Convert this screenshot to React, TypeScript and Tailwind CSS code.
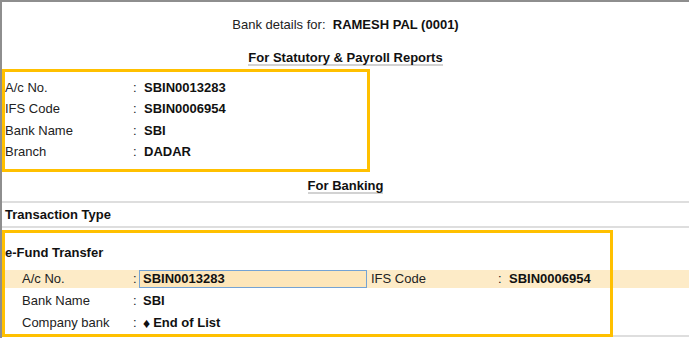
import * as React from 'react'

type Row = { label: string; value: React.ReactNode }

const statutory: Row[] = [
  { label: 'A/c No.', value: 'SBIN0013283' },
  { label: 'IFS Code', value: 'SBIN0006954' },
  { label: 'Bank Name', value: 'SBI' },
  { label: 'Branch', value: 'DADAR' },
]

function Field({ label, value }: Row) {
  return (
    <div className="flex h-[21.5px] items-center">
      <span className="w-[128px]">{label}</span>
      <span className="w-[11px]">:</span>
      <span className="font-bold text-[#111]">{value}</span>
    </div>
  )
}

function SectionTitle({ children }: { children: React.ReactNode }) {
  return (
    <div className="flex h-4 justify-center">
      <span className="border-b-2 border-[#d2d2d2] font-bold text-[#111]">{children}</span>
    </div>
  )
}

export default function App() {
  return (
    <div className="h-[338px] w-[689px] overflow-hidden border-t-2 border-l-2 border-[#8e8e8e] bg-white font-['Liberation_Sans',Arial,sans-serif] text-[13px] leading-4 text-[#222]">
      <div className="pt-[15px] text-center">
        Bank details for:&nbsp; <span className="font-bold text-[#111]">RAMESH PAL (0001)</span>
      </div>

      <div className="mt-[17px]">
        <SectionTitle>For Statutory &amp; Payroll Reports</SectionTitle>
      </div>

      {/* statutory block */}
      <div className="mt-[3px] w-[368px] border-[3px] border-[#FFC000] pt-[5px] pb-[6px]">
        {statutory.map((r) => (
          <Field key={r.label} {...r} />
        ))}
      </div>

      <div className="mt-[6px]">
        <SectionTitle>For Banking</SectionTitle>
      </div>

      <div className="mt-[7px] h-[2px] bg-[#dedede]" />
      <div className="flex h-[23px] items-center pl-[3px] font-bold text-[#111]">Transaction Type</div>
      <div className="h-[2px] bg-[#dedede]" />

      {/* e-fund block */}
      <div className="relative mt-[2px] border-b-2 border-[#dedede] pt-3 pb-[1px]">
        <div className="flex h-[22px] items-center pl-[3px] font-bold text-[#111]">e-Fund Transfer</div>

        <div className="mt-[6px] flex h-[18px] items-center bg-[#fdebc7] pl-5">
          <span className="w-[111px]">A/c No.</span>
          <span className="w-[6px]">:</span>
          <span className="flex h-[18px] w-[228px] items-center border border-[#74a3d4] bg-[#fde6b9] pl-[3px] font-bold text-[#111]">
            SBIN0013283
          </span>
          <span className="ml-[4px] w-[127px]">IFS Code</span>
          <span className="w-[11px]">:</span>
          <span className="font-bold text-[#111]">SBIN0006954</span>
        </div>

        <div className="mt-[2px] flex h-[22px] items-center pl-5">
          <span className="w-[111px]">Bank Name</span>
          <span className="w-[10px]">:</span>
          <span className="font-bold text-[#111]">SBI</span>
        </div>
        <div className="flex h-[22px] items-center pl-5">
          <span className="w-[111px]">Company bank</span>
          <span className="w-[10px]">:</span>
          <span className="flex items-center font-bold text-[#111]">
            <span className="mr-[3px] text-[14px] leading-4">♦</span>End of List
          </span>
        </div>

        {/* highlight frame drawn over the rows */}
        <div className="pointer-events-none absolute top-0 bottom-[-2px] left-0 w-[611px] border-[3px] border-[#FFC000]" />
      </div>
    </div>
  )
}
